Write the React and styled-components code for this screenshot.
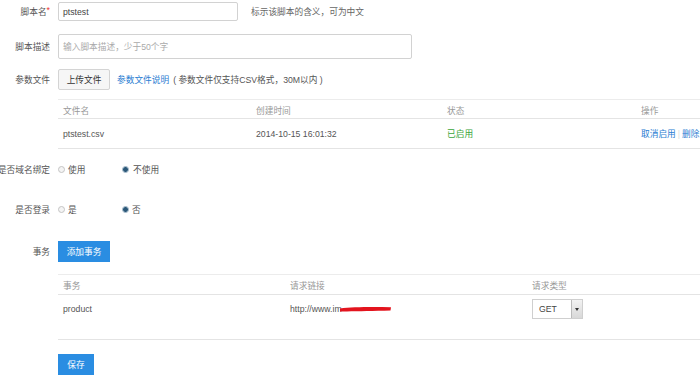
import React from 'react';
import styled, { createGlobalStyle } from 'styled-components';

const GlobalStyle = createGlobalStyle`
  body {
    margin: 0;
    background: #fff;
    font-family: "Liberation Sans", "Noto Sans CJK SC", sans-serif;
    font-size: 8.7px;
    color: #555;
    overflow: hidden;
  }
`;

const Page = styled.div`
  width: 700px;
  height: 377px;
  padding-top: 2px;
  box-sizing: border-box;
  overflow: hidden;
`;

const FormRow = styled.div`
  display: flex;
  align-items: center;
  min-height: ${p => p.$h || 20}px;
  margin-bottom: ${p => p.$mb || 0}px;
`;

const Label = styled.div`
  width: 50px;
  flex-shrink: 0;
  display: flex;
  justify-content: flex-end;
  white-space: nowrap;
  margin-right: 8px;
  color: #555;
`;

const Star = styled.span`
  color: #e33;
`;

const Field = styled.div`
  flex: 1;
  display: flex;
  align-items: center;
  min-width: 0;
`;

const TextInput = styled.div`
  width: ${p => p.$w}px;
  height: ${p => p.$h}px;
  box-sizing: border-box;
  border: 1px solid #d2d2d2;
  border-radius: 2px;
  padding: 0 4px;
  display: flex;
  align-items: center;
  color: ${p => (p.$placeholder ? '#aaa' : '#444')};
`;

const Hint = styled.span`
  margin-left: 13px;
  color: #666;
`;

const GreyButton = styled.div`
  width: 52px;
  height: 21px;
  box-sizing: border-box;
  border: 1px solid #d4d4d4;
  background: #f6f6f6;
  border-radius: 2px;
  display: flex;
  align-items: center;
  justify-content: center;
  color: #333;
`;

const BlueButton = styled.div`
  width: ${p => p.$w}px;
  height: 21px;
  background: #2a8de2;
  color: #fff;
  display: flex;
  align-items: center;
  justify-content: center;
`;

const Link = styled.span`
  color: #2a7dd2;
  margin-left: ${p => p.$ml || 0}px;
`;

const Note = styled.span`
  margin-left: 4px;
  color: #555;
`;

const Table = styled.div`
  margin-left: 58px;
  width: 660px;
  border-top: 1px solid #ececec;
  border-bottom: 1px solid #e4e4e4;
  margin-bottom: ${p => p.$mb || 0}px;
`;

const TRow = styled.div`
  display: grid;
  grid-template-columns: ${p => p.$cols};
  align-items: ${p => (p.$top ? 'start' : 'center')};
  padding-top: ${p => (p.$top ? 4 : 0)}px;
  box-sizing: border-box;
  height: ${p => p.$h}px;
  border-bottom: ${p => (p.$head ? '1px solid #e4e4e4' : 'none')};
  color: ${p => (p.$head ? '#999' : '#555')};
`;

const Cell = styled.div`
  padding-left: 5px;
  min-height: 20px;
  white-space: nowrap;
  position: relative;
  display: flex;
  align-items: center;
`;

const Status = styled.span`
  color: #3aa53a;
`;

const Sep = styled.span`
  color: #ddd;
  margin: 0 2px;
`;

const RadioGroup = styled.div`
  display: flex;
  align-items: center;
`;

const RadioItem = styled.label`
  display: flex;
  align-items: center;
  width: ${p => p.$w || 'auto'};
  color: #555;
`;

const RadioDot = styled.span`
  width: 7px;
  height: 7px;
  border-radius: 50%;
  box-sizing: border-box;
  border: 1px solid ${p => (p.$on ? '#8fa9bd' : '#c4c4c4')};
  background: ${p => (p.$on ? 'radial-gradient(circle, #2b5878 0 2.2px, #e8eef3 2.6px)' : '#f4f4f4')};
  margin-right: ${p => p.$mr || 3}px;
`;

const Select = styled.div`
  width: 51px;
  height: 20px;
  box-sizing: border-box;
  border: 1px solid #cfcfcf;
  display: flex;
  align-items: stretch;
  color: #444;
`;

const SelectText = styled.div`
  flex: 1;
  display: flex;
  align-items: center;
  padding-left: 6px;
`;

const SelectArrow = styled.div`
  width: 10px;
  background: linear-gradient(#f2f2f2, #d8d8d8);
  border-left: 1px solid #bbb;
  display: flex;
  align-items: center;
  justify-content: center;
  &::after {
    content: '';
    border-left: 2.5px solid transparent;
    border-right: 2.5px solid transparent;
    border-top: 3px solid #333;
  }
`;

const Scribble = styled.svg`
  position: absolute;
  left: 55px;
  top: 50%;
  margin-top: -4px;
`;

const cols1 = '193px 191px 194px 1fr';
const cols2 = '227px 242px 1fr';

function Radio({ on, children, w, mr }) {
  return (
    <RadioItem $w={w}>
      <RadioDot $on={on} $mr={mr} />
      {children}
    </RadioItem>
  );
}

export default function App() {
  return (
    <>
      <GlobalStyle />
      <Page>
        <FormRow $h={19} $mb={13}>
          <Label>脚本名<Star>*</Star></Label>
          <Field>
            <TextInput $w={180} $h={19}>ptstest</TextInput>
            <Hint>标示该脚本的含义，可为中文</Hint>
          </Field>
        </FormRow>

        <FormRow $h={25} $mb={10}>
          <Label>脚本描述</Label>
          <Field>
            <TextInput $w={354} $h={25} $placeholder>输入脚本描述，少于50个字</TextInput>
          </Field>
        </FormRow>

        <FormRow $h={21} $mb={9}>
          <Label>参数文件</Label>
          <Field>
            <GreyButton>上传文件</GreyButton>
            <Link $ml={7}>参数文件说明</Link>
            <Note>( 参数文件仅支持CSV格式，30M以内 )</Note>
          </Field>
        </FormRow>

        <Table $mb={10}>
          <TRow $cols={cols1} $h={19} $head>
            <Cell>文件名</Cell>
            <Cell>创建时间</Cell>
            <Cell>状态</Cell>
            <Cell>操作</Cell>
          </TRow>
          <TRow $cols={cols1} $h={29}>
            <Cell>ptstest.csv</Cell>
            <Cell>2014-10-15 16:01:32</Cell>
            <Cell><Status>已启用</Status></Cell>
            <Cell>
              <Link>取消启用</Link>
              <Sep>|</Sep>
              <Link>删除</Link>
            </Cell>
          </TRow>
        </Table>

        <FormRow $h={20} $mb={20}>
          <Label>是否域名绑定</Label>
          <Field>
            <RadioGroup>
              <Radio w="64px">使用</Radio>
              <Radio on mr={4}>不使用</Radio>
            </RadioGroup>
          </Field>
        </FormRow>

        <FormRow $h={20} $mb={22}>
          <Label>是否登录</Label>
          <Field>
            <RadioGroup>
              <Radio w="64px">是</Radio>
              <Radio on>否</Radio>
            </RadioGroup>
          </Field>
        </FormRow>

        <FormRow $h={21} $mb={12}>
          <Label>事务</Label>
          <Field>
            <BlueButton $w={52}>添加事务</BlueButton>
          </Field>
        </FormRow>

        <Table $mb={14}>
          <TRow $cols={cols2} $h={20} $head>
            <Cell>事务</Cell>
            <Cell>请求链接</Cell>
            <Cell>请求类型</Cell>
          </TRow>
          <TRow $cols={cols2} $h={44} $top>
            <Cell>product</Cell>
            <Cell>
              http://www.im
              <Scribble width="52" height="8" viewBox="0 0 52 8">
                <path d="M0 3.5 C12 2 30 1.8 51 2.2 L50.5 5.6 C30 6.2 12 6.6 0 6.4 Z" fill="#e3141e" />
              </Scribble>
            </Cell>
            <Cell>
              <Select>
                <SelectText>GET</SelectText>
                <SelectArrow />
              </Select>
            </Cell>
          </TRow>
        </Table>

        <FormRow $h={21}>
          <Label />
          <Field>
            <BlueButton $w={36}>保存</BlueButton>
          </Field>
        </FormRow>
      </Page>
    </>
  );
}
